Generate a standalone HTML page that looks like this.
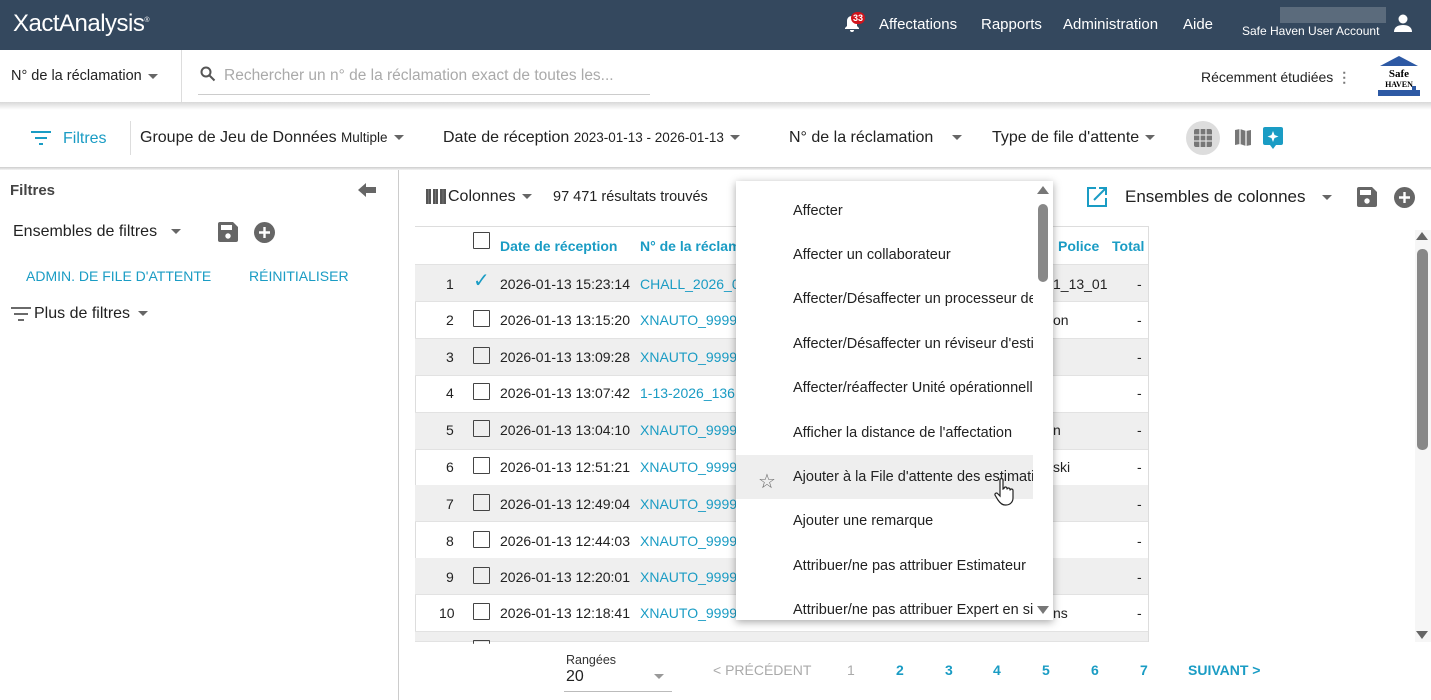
<!DOCTYPE html>
<html><head><meta charset="utf-8"><style>
*{box-sizing:border-box;margin:0;padding:0}
body{width:1431px;height:700px;overflow:hidden;background:#fff;font-family:"Liberation Sans",sans-serif;color:#222;position:relative;font-size:14px}
.a{position:absolute;white-space:nowrap}
.hdr{left:0;top:0;width:1431px;height:50px;background:#34485e}
.w{color:#fff}
.blue{color:#1a9cc4}
.row{position:absolute;left:415px;width:733px;height:37px;border-bottom:1px solid #e2e2e2}
.row.g{background:#efefef}
.cb{position:absolute;width:17px;height:17px;border:1.5px solid #444;border-radius:1px}
.tri{display:inline-block;width:0;height:0;border-left:5px solid transparent;border-right:5px solid transparent;border-top:5px solid #666;vertical-align:middle;margin-left:6px}
.menu{left:736px;top:181px;width:317px;height:439px;background:#fff;box-shadow:0 2px 8px rgba(0,0,0,.35);overflow:hidden}
.mi{position:absolute;left:57px;font-size:14.5px;color:#222;white-space:nowrap}
</style></head><body>
<div class="a hdr"></div>
<div class="a w" style="left:13px;top:10px;font-size:24px;letter-spacing:-0.5px">XactAnalysis<sup style="font-size:7px">®</sup></div>
<svg class="a" style="left:843px;top:14px" width="18" height="20" viewBox="0 0 18 20"><path d="M9 2c-3 0-5 2-5 5v5l-2 2v1h14v-1l-2-2V7c0-3-2-5-5-5zM7 16a2 2 0 004 0z" fill="#fff"/></svg>
<div class="a" style="left:851px;top:12px;width:14px;height:12px;background:#d0131b;border-radius:6px;color:#fff;font-size:9px;text-align:center;line-height:12px;font-weight:bold">33</div>
<div class="a w" style="left:879px;top:16px;font-size:15px">Affectations</div>
<div class="a w" style="left:981px;top:16px;font-size:15px">Rapports</div>
<div class="a w" style="left:1063px;top:16px;font-size:15px">Administration</div>
<div class="a w" style="left:1183px;top:16px;font-size:15px">Aide</div>
<div class="a" style="left:1280px;top:7px;width:106px;height:16px;background:#5b6b7c"></div>
<div class="a w" style="left:1242px;top:24px;font-size:12px">Safe Haven User Account</div>
<svg class="a" style="left:1394px;top:13px" width="18" height="20" viewBox="0 0 18 20"><circle cx="9" cy="6" r="4.5" fill="#fff"/><path d="M0 19c0-5 4-7 9-7s9 2 9 7z" fill="#fff"/></svg>

<div class="a" style="left:11px;top:68px;font-size:14.5px">N° de la réclamation<span class="tri"></span></div>
<div class="a" style="left:181px;top:50px;width:1px;height:52px;background:#ddd"></div>
<svg class="a" style="left:200px;top:66px" width="16" height="16" viewBox="0 0 16 16"><circle cx="6" cy="6" r="4.5" stroke="#555" stroke-width="2" fill="none"/><path d="M9.5 9.5l5 5" stroke="#555" stroke-width="2"/></svg>
<div class="a" style="left:224px;top:67px;font-size:15.5px;color:#aaa">Rechercher un n° de la réclamation exact de toutes les...</div>
<div class="a" style="left:198px;top:94px;width:452px;height:1px;background:#ccc"></div>
<div class="a" style="left:1201px;top:69px;font-size:14px">Récemment étudiées <b style="color:#777">⋮</b></div>
<svg class="a" style="left:1376px;top:54px" width="46" height="44" viewBox="0 0 46 44"><path d="M4 12L23 2 42 12z" fill="#2d59a4"/><text x="23" y="23" font-family="Liberation Serif" font-size="11" font-weight="bold" text-anchor="middle">Safe</text><text x="23" y="33" font-family="Liberation Serif" font-size="8" font-weight="bold" text-anchor="middle">HAVEN</text><rect x="2" y="36" width="42" height="6" fill="#2d59a4"/><rect x="36" y="32" width="4" height="10" fill="#2d59a4"/></svg>

<div class="a" style="left:0;top:102px;width:1431px;height:8px;background:linear-gradient(#d8d8d8,#fff)"></div>
<div class="a" style="left:0;top:167px;width:1431px;height:3px;background:linear-gradient(#ccc,#f4f4f4)"></div>
<svg class="a" style="left:31px;top:131px" width="20" height="14" viewBox="0 0 20 14"><path d="M0 1h20M4 7h12M8 13h4" stroke="#1a9cc4" stroke-width="2"/></svg>
<div class="a blue" style="left:63px;top:130px;font-size:16px">Filtres</div>
<div class="a" style="left:130px;top:121px;width:1px;height:34px;background:#ddd"></div>
<div class="a" style="left:140px;top:129px;font-size:16px">Groupe de Jeu de Données <span style="font-size:13.5px">Multiple</span><span class="tri"></span></div>
<div class="a" style="left:443px;top:129px;font-size:16px">Date de réception <span style="font-size:13.5px">2023-01-13 - 2026-01-13</span><span class="tri"></span></div>
<div class="a" style="left:789px;top:129px;font-size:16px">N° de la réclamation <span class="tri" style="margin-left:14px"></span></div>
<div class="a" style="left:992px;top:129px;font-size:16px">Type de file d'attente<span class="tri"></span></div>
<div class="a" style="left:1186px;top:121px;width:34px;height:34px;border-radius:17px;background:#ddd"></div>
<svg class="a" style="left:1194px;top:129px" width="18" height="18" viewBox="0 0 18 18"><rect width="18" height="18" rx="2" fill="#777"/><path d="M6 0v18M12 0v18M0 6h18M0 12h18" stroke="#ddd" stroke-width="1.3"/></svg>
<svg class="a" style="left:1234px;top:128px" width="18" height="19" viewBox="0 0 18 19"><path d="M1 2l5-1 6 2 5-1v15l-5 1-6-2-5 1z" fill="#777"/><path d="M6 1v15M12 3v15" stroke="#fff" stroke-width="1.2"/></svg>
<svg class="a" style="left:1263px;top:127px" width="20" height="22" viewBox="0 0 20 22"><path d="M2 0h16a2 2 0 012 2v14a2 2 0 01-2 2h-5l-3 4-3-4H2a2 2 0 01-2-2V2a2 2 0 012-2z" fill="#1a9cc4"/><path d="M10 4l1.5 4 4 1.5-4 1.5-1.5 4-1.5-4-4-1.5 4-1.5z" fill="#fff"/></svg>

<div class="a" style="left:398px;top:170px;width:1px;height:530px;background:#ccc"></div>
<div class="a" style="left:10px;top:182px;font-size:15px;font-weight:bold;color:#444">Filtres</div>
<svg class="a" style="left:358px;top:182px" width="18" height="16" viewBox="0 0 18 16"><path d="M0 8L8 1v4h10v6H8v4z" fill="#666"/></svg>
<div class="a" style="left:13px;top:223px;font-size:16px">Ensembles de filtres<span class="tri" style="margin-left:14px"></span></div>
<svg class="a" style="left:218px;top:222px" width="20" height="20" viewBox="0 0 20 20"><path d="M0 2a2 2 0 012-2h13l5 5v13a2 2 0 01-2 2H2a2 2 0 01-2-2z" fill="#666"/><rect x="3" y="3" width="11" height="5" fill="#fff"/><circle cx="10" cy="14" r="2.7" fill="#fff"/></svg>
<svg class="a" style="left:254px;top:222px" width="21" height="21" viewBox="0 0 21 21"><circle cx="10.5" cy="10.5" r="10.5" fill="#666"/><path d="M10.5 5v11M5 10.5h11" stroke="#fff" stroke-width="2.4"/></svg>
<div class="a blue" style="left:26px;top:268px;font-size:14px">ADMIN. DE FILE D'ATTENTE</div>
<div class="a blue" style="left:249px;top:268px;font-size:14px">RÉINITIALISER</div>
<svg class="a" style="left:11px;top:307px" width="20" height="14" viewBox="0 0 20 14"><path d="M0 1h20M3 7h14M7 13h6" stroke="#555" stroke-width="1.8"/></svg>
<div class="a" style="left:34px;top:305px;font-size:16px">Plus de filtres<span class="tri" style="margin-left:8px"></span></div>

<svg class="a" style="left:426px;top:189px" width="20" height="15" viewBox="0 0 20 15"><path d="M0 0h5v15H0zM7 0h5v15H7zM14 0h6v15h-6z" fill="#555"/><path d="M2.5 0v15M9.5 0v15M17 0v15" stroke="#888" stroke-width=".6"/></svg>
<div class="a" style="left:448px;top:188px;font-size:16px">Colonnes<span class="tri"></span></div>
<div class="a" style="left:553px;top:189px;font-size:14.5px">97 471 résultats trouvés</div>
<svg class="a" style="left:1087px;top:187px" width="20" height="20" viewBox="0 0 20 20"><path d="M9 1H1v18h18v-8" stroke="#1a9cc4" stroke-width="2" fill="none"/><path d="M7 13L19 1M12 1h7v7" stroke="#1a9cc4" stroke-width="2" fill="none"/></svg>
<div class="a" style="left:1125px;top:187px;font-size:17px">Ensembles de colonnes<span class="tri" style="margin-left:16px"></span></div>
<svg class="a" style="left:1357px;top:187px" width="20" height="20" viewBox="0 0 20 20"><path d="M0 2a2 2 0 012-2h13l5 5v13a2 2 0 01-2 2H2a2 2 0 01-2-2z" fill="#666"/><rect x="3" y="3" width="11" height="5" fill="#fff"/><circle cx="10" cy="14" r="2.7" fill="#fff"/></svg>
<svg class="a" style="left:1394px;top:187px" width="21" height="21" viewBox="0 0 21 21"><circle cx="10.5" cy="10.5" r="10.5" fill="#666"/><path d="M10.5 5v11M5 10.5h11" stroke="#fff" stroke-width="2.4"/></svg>

<div class="a" style="left:415px;top:226px;width:734px;height:416px;border:1px solid #ddd;border-bottom:none;overflow:hidden">
</div>
<div class="row" style="top:227px;height:38px;background:#fff"></div>
<div class="cb" style="left:473px;top:232px"></div>
<div class="a blue" style="left:500px;top:238px;font-size:14px;font-weight:bold">Date de réception</div>
<div class="a blue" style="left:640px;top:238px;font-size:14px;font-weight:bold">N° de la réclama</div>
<div class="a blue" style="left:1058px;top:238px;font-size:14px;font-weight:bold">Police</div>
<div class="a blue" style="left:1112px;top:238px;font-size:14px;font-weight:bold">Total</div>

<div class="row g" style="top:265px"></div><div class="row" style="top:302px"></div>
<div class="row g" style="top:339px"></div><div class="row" style="top:376px"></div>
<div class="row g" style="top:413px"></div><div class="row" style="top:449px"></div>
<div class="row g" style="top:485px"></div><div class="row" style="top:522px"></div>
<div class="row g" style="top:558px"></div><div class="row" style="top:595px"></div>
<div class="row g" style="top:632px;height:10px"></div>
<div class="cb" style="left:473px;top:640px;height:4px;border-bottom:none"></div>

<div id="rows"></div>
<div class="a" style="left:446px;top:276px;font-size:14px">1</div><div class="a" style="left:473px;top:268px;font-size:20px;color:#1a9cc4">✓</div><div class="a" style="left:500px;top:276px;font-size:14px">2026-01-13 15:23:14</div><div class="a blue" style="left:640px;top:276px;font-size:14px">CHALL_2026_0</div><div class="a" style="left:1053px;top:276px;font-size:14px">1_13_01</div><div class="a" style="left:1137px;top:276px">-</div>
<div class="a" style="left:446px;top:312px;font-size:14px">2</div><div class="cb" style="left:473px;top:310px"></div><div class="a" style="left:500px;top:312px;font-size:14px">2026-01-13 13:15:20</div><div class="a blue" style="left:640px;top:312px;font-size:14px">XNAUTO_99991</div><div class="a" style="left:1053px;top:312px;font-size:14px">on</div><div class="a" style="left:1137px;top:312px">-</div>
<div class="a" style="left:446px;top:349px;font-size:14px">3</div><div class="cb" style="left:473px;top:347px"></div><div class="a" style="left:500px;top:349px;font-size:14px">2026-01-13 13:09:28</div><div class="a blue" style="left:640px;top:349px;font-size:14px">XNAUTO_99996</div><div class="a" style="left:1137px;top:349px">-</div>
<div class="a" style="left:446px;top:385px;font-size:14px">4</div><div class="cb" style="left:473px;top:383px"></div><div class="a" style="left:500px;top:385px;font-size:14px">2026-01-13 13:07:42</div><div class="a blue" style="left:640px;top:385px;font-size:14px">1-13-2026_136</div><div class="a" style="left:1137px;top:385px">-</div>
<div class="a" style="left:446px;top:422px;font-size:14px">5</div><div class="cb" style="left:473px;top:420px"></div><div class="a" style="left:500px;top:422px;font-size:14px">2026-01-13 13:04:10</div><div class="a blue" style="left:640px;top:422px;font-size:14px">XNAUTO_99994</div><div class="a" style="left:1053px;top:422px;font-size:14px">n</div><div class="a" style="left:1137px;top:422px">-</div>
<div class="a" style="left:446px;top:459px;font-size:14px">6</div><div class="cb" style="left:473px;top:457px"></div><div class="a" style="left:500px;top:459px;font-size:14px">2026-01-13 12:51:21</div><div class="a blue" style="left:640px;top:459px;font-size:14px">XNAUTO_99996</div><div class="a" style="left:1053px;top:459px;font-size:14px">ski</div><div class="a" style="left:1137px;top:459px">-</div>
<div class="a" style="left:446px;top:496px;font-size:14px">7</div><div class="cb" style="left:473px;top:494px"></div><div class="a" style="left:500px;top:496px;font-size:14px">2026-01-13 12:49:04</div><div class="a blue" style="left:640px;top:496px;font-size:14px">XNAUTO_99991</div><div class="a" style="left:1137px;top:496px">-</div>
<div class="a" style="left:446px;top:533px;font-size:14px">8</div><div class="cb" style="left:473px;top:531px"></div><div class="a" style="left:500px;top:533px;font-size:14px">2026-01-13 12:44:03</div><div class="a blue" style="left:640px;top:533px;font-size:14px">XNAUTO_99998</div><div class="a" style="left:1137px;top:533px">-</div>
<div class="a" style="left:446px;top:569px;font-size:14px">9</div><div class="cb" style="left:473px;top:567px"></div><div class="a" style="left:500px;top:569px;font-size:14px">2026-01-13 12:20:01</div><div class="a blue" style="left:640px;top:569px;font-size:14px">XNAUTO_99996</div><div class="a" style="left:1137px;top:569px">-</div>
<div class="a" style="left:439px;top:605px;font-size:14px">10</div><div class="cb" style="left:473px;top:603px"></div><div class="a" style="left:500px;top:605px;font-size:14px">2026-01-13 12:18:41</div><div class="a blue" style="left:640px;top:605px;font-size:14px">XNAUTO_99991</div><div class="a" style="left:1053px;top:605px;font-size:14px">ns</div><div class="a" style="left:1137px;top:605px">-</div>

<div class="a" style="left:1415px;top:230px;width:16px;height:412px;background:#f6f6f6"></div>
<div class="a" style="left:1416px;top:232px;border-left:6px solid transparent;border-right:6px solid transparent;border-bottom:8px solid #666;width:0"></div>
<div class="a" style="left:1417px;top:249px;width:11px;height:201px;background:#888;border-radius:5px"></div>
<div class="a" style="left:1416px;top:631px;border-left:6px solid transparent;border-right:6px solid transparent;border-top:8px solid #666;width:0"></div>

<div class="a menu">
<div class="mi" style="top:22px">Affecter</div>
<div class="mi" style="top:66px">Affecter un collaborateur</div>
<div class="mi" style="top:110px">Affecter/Désaffecter un processeur de</div>
<div class="mi" style="top:155px">Affecter/Désaffecter un réviseur d'estimation</div>
<div class="mi" style="top:199px">Affecter/réaffecter Unité opérationnelle</div>
<div class="mi" style="top:244px">Afficher la distance de l'affectation</div>
<div style="position:absolute;left:0;top:274px;width:297px;height:44px;background:#eee"></div>
<div class="mi" style="top:288px;left:22px;font-size:20px;color:#666">☆</div>
<div class="mi" style="top:288px">Ajouter à la File d'attente des estimations</div>
<div class="mi" style="top:332px">Ajouter une remarque</div>
<div class="mi" style="top:377px">Attribuer/ne pas attribuer Estimateur</div>
<div class="mi" style="top:421px">Attribuer/ne pas attribuer Expert en sinistres</div>
<div style="position:absolute;left:297px;top:0;width:20px;height:439px;background:#fff"></div>
<div style="position:absolute;left:301px;top:5px;border-left:6px solid transparent;border-right:6px solid transparent;border-bottom:8px solid #777;width:0"></div>
<div style="position:absolute;left:302px;top:23px;width:10px;height:78px;background:#888;border-radius:5px"></div>
<div style="position:absolute;left:301px;top:425px;border-left:6px solid transparent;border-right:6px solid transparent;border-top:8px solid #777;width:0"></div>
</div>
<svg class="a" style="left:993px;top:478px" width="22" height="28" viewBox="0 0 22 28"><path d="M7 2a1.5 1.5 0 013 0v9l1-.5a1.5 1.5 0 013 0v1a1.5 1.5 0 013 0v1a1.5 1.5 0 013 0V20c0 4-3 7-7 7h-1c-3 0-5-2-7-5l-3-5a1.5 1.5 0 012.5-1.5L7 18z" fill="#fff" stroke="#222" stroke-width="1.2"/></svg>

<div class="a" style="left:566px;top:653px;font-size:12.5px;color:#333">Rangées</div>
<div class="a" style="left:566px;top:668px;font-size:16px">20</div>
<div class="a" style="left:654px;top:674px;border-left:5px solid transparent;border-right:5px solid transparent;border-top:5px solid #999;width:0"></div>
<div class="a" style="left:564px;top:691px;width:108px;height:1px;background:#bbb"></div>
<div class="a" style="left:713px;top:662px;font-size:14px;color:#aaa">&lt; PRÉCÉDENT</div>
<div class="a" style="left:847px;top:662px;font-size:14px;color:#aaa">1</div>
<div class="a blue" style="left:896px;top:662px;font-size:14px;font-weight:bold">2</div>
<div class="a blue" style="left:945px;top:662px;font-size:14px;font-weight:bold">3</div>
<div class="a blue" style="left:993px;top:662px;font-size:14px;font-weight:bold">4</div>
<div class="a blue" style="left:1042px;top:662px;font-size:14px;font-weight:bold">5</div>
<div class="a blue" style="left:1091px;top:662px;font-size:14px;font-weight:bold">6</div>
<div class="a blue" style="left:1140px;top:662px;font-size:14px;font-weight:bold">7</div>
<div class="a blue" style="left:1188px;top:662px;font-size:14px;font-weight:bold">SUIVANT &gt;</div>
</body></html>
